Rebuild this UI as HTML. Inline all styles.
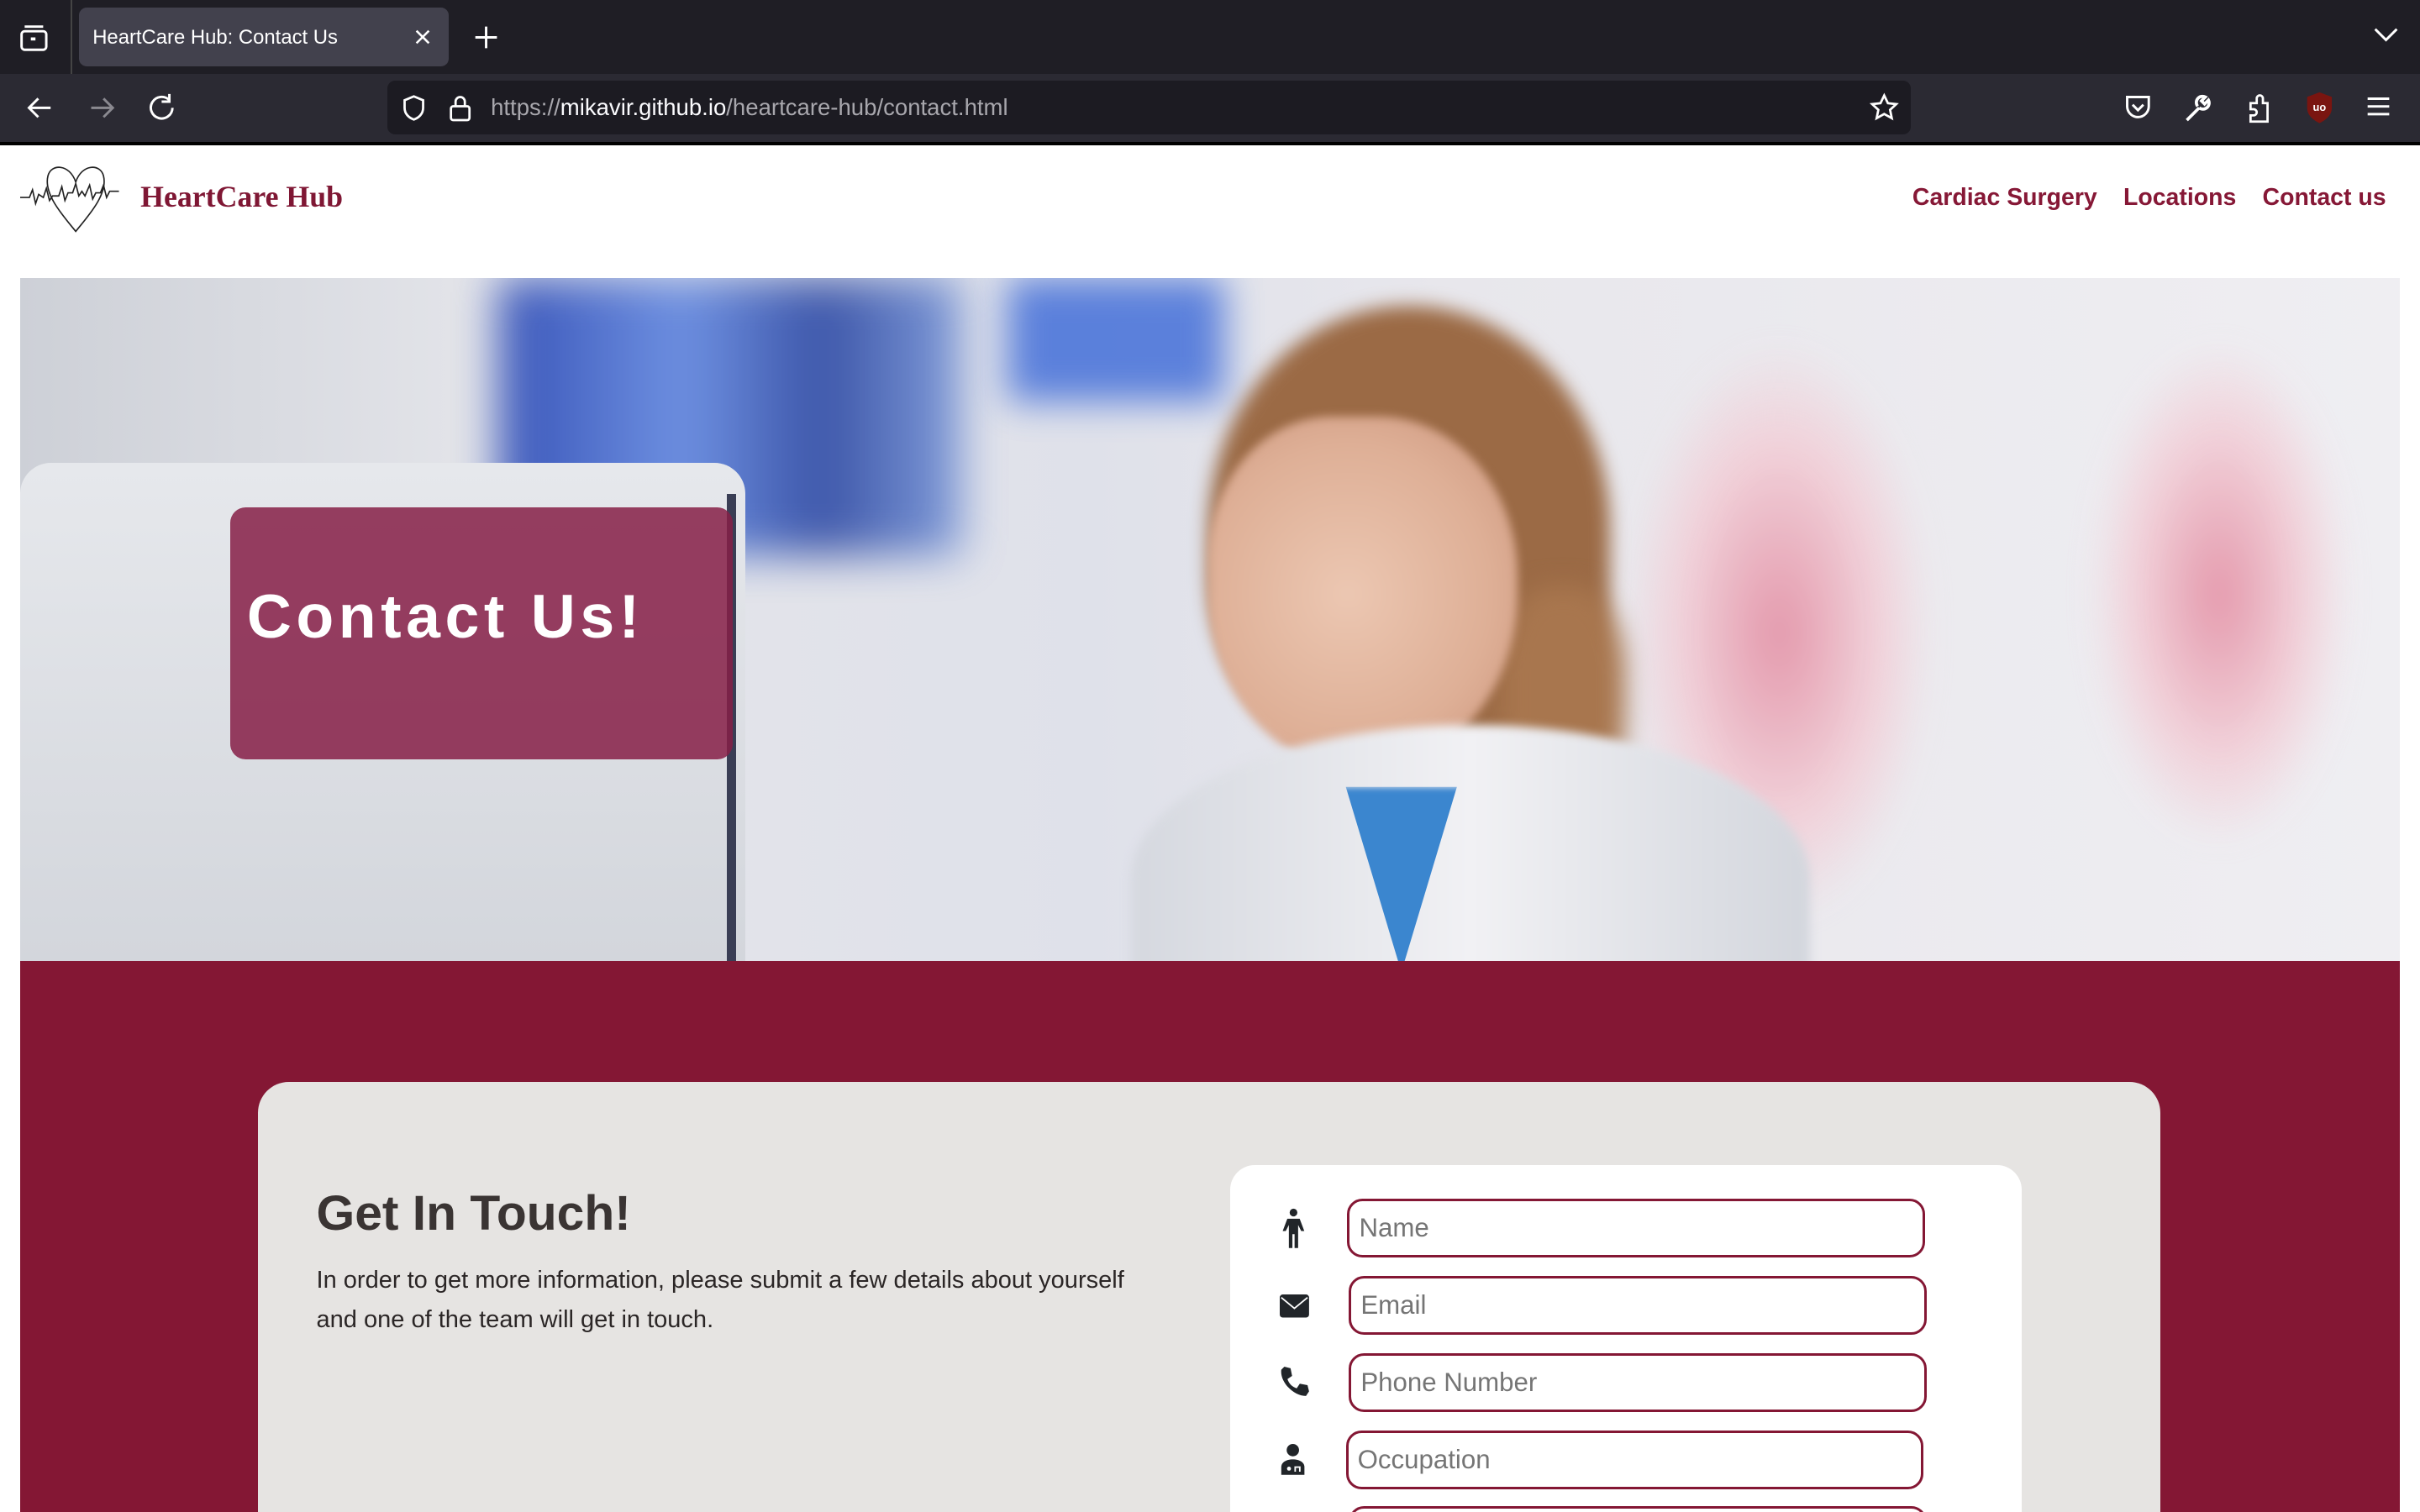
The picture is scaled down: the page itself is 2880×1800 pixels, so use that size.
<!DOCTYPE html>
<html><head><meta charset="utf-8"><style>
html,body{margin:0;padding:0;overflow:hidden}
body{width:1568px;height:980px;zoom:1.83673;position:relative;background:#fff;font-family:"Liberation Sans",sans-serif}
.abs{position:absolute}
svg{position:absolute}
</style></head><body>
<!-- tab bar -->
<div class="abs" style="left:0;top:0;width:1568px;height:48px;background:#1f1e25"></div>
<div class="abs" style="left:46px;top:0;width:1px;height:48px;background:#444"></div>
<svg style="left:12px;top:15px" width="20" height="20" viewBox="0 0 20 20" fill="none" stroke="#fff" stroke-width="1.6"><rect x="2" y="5" width="16" height="12" rx="2"/><path d="M4 2h12"/><rect x="8" y="9" width="3" height="2" fill="#fff" stroke="none"/></svg>
<div class="abs" style="left:51px;top:5px;width:240px;height:38px;background:#42414d;border-radius:5px"></div>
<div class="abs" style="left:60px;top:17px;color:#fff;font-size:13px">HeartCare Hub: Contact Us</div>
<svg style="left:268px;top:18px" width="12" height="12" viewBox="0 0 12 12" stroke="#fff" stroke-width="1.4"><path d="M2 2l8 8M10 2l-8 8"/></svg>
<svg style="left:306px;top:15px" width="18" height="18" viewBox="0 0 18 18" stroke="#fff" stroke-width="1.6"><path d="M9 2v14M2 9h14"/></svg>
<svg style="left:1537px;top:17px" width="18" height="12" viewBox="0 0 18 12" fill="none" stroke="#fff" stroke-width="1.6"><path d="M2 2l7 7 7-7"/></svg>
<!-- toolbar -->
<div class="abs" style="left:0;top:48px;width:1568px;height:44px;background:#2b2a33"></div>
<div class="abs" style="left:0;top:92px;width:1568px;height:2px;background:#000"></div>
<svg style="left:16px;top:60px" width="20" height="20" viewBox="0 0 20 20" fill="none" stroke="#fff" stroke-width="1.6"><path d="M17 10H3M9 4l-6 6 6 6"/></svg>
<svg style="left:56px;top:60px" width="20" height="20" viewBox="0 0 20 20" fill="none" stroke="#8a8990" stroke-width="1.6"><path d="M3 10h14M11 4l6 6-6 6"/></svg>
<svg style="left:95px;top:60px" width="20" height="20" viewBox="0 0 20 20" fill="none" stroke="#fff" stroke-width="1.6"><path d="M15 5A7 7 0 1 0 17 10"/><path d="M15 1v5h-5"/></svg>
<div class="abs" style="left:251px;top:52px;width:987px;height:35px;background:#1c1b22;border-radius:5px"></div>
<svg style="left:259px;top:61px" width="18" height="18" viewBox="0 0 18 18" fill="none" stroke="#fff" stroke-width="1.5"><path d="M9 1.5l6 2.5v5c0 4-3 6.5-6 7.5-3-1-6-3.5-6-7.5V4z"/></svg>
<svg style="left:290px;top:60px" width="16" height="20" viewBox="0 0 16 20" fill="none" stroke="#fff" stroke-width="1.5"><rect x="2" y="9" width="12" height="9" rx="1.5"/><path d="M5 9V6a3 3 0 0 1 6 0v3"/></svg>
<div class="abs" style="left:318px;top:61px;font-size:15px;color:#a8a7ad">https://<span style="color:#fbfbfe">mikavir.github.io</span>/heartcare-hub/contact.html</div>
<svg style="left:1211px;top:60px" width="20" height="20" viewBox="0 0 20 20" fill="none" stroke="#fff" stroke-width="1.5"><path d="M10 2l2.4 5 5.4.6-4 3.7 1.1 5.4L10 14l-4.9 2.7 1.1-5.4-4-3.7 5.4-.6z"/></svg>
<svg style="left:1375px;top:60px" width="20" height="20" viewBox="0 0 20 20" fill="none" stroke="#fff" stroke-width="1.6"><path d="M3 3h14v6a7 7 0 0 1-14 0z"/><path d="M6.5 8l3.5 3.5L13.5 8"/></svg>
<svg style="left:1414px;top:60px" width="20" height="20" viewBox="0 0 20 20" fill="none" stroke="#fff" stroke-width="2"><path d="M3 18l8-8"/><path d="M11 10a4 4 0 0 0 6-5l-2.5 2.5-2-2L15 3a4 4 0 0 0-5 6"/></svg>
<svg style="left:1454px;top:59px" width="20" height="22" viewBox="0 0 20 22" fill="none" stroke="#fff" stroke-width="1.5"><path d="M4 8h4V5a2 2 0 0 1 4 0v3h3v12H4v-4h2a2 2 0 0 0 0-4H4z"/></svg>
<svg style="left:1493px;top:59px" width="20" height="22" viewBox="0 0 20 22"><path d="M10 1l8 3v7c0 5-4 8-8 10-4-2-8-5-8-10V4z" fill="#7a1510"/><text x="10" y="13" font-size="7" fill="#fff" text-anchor="middle" font-family="Liberation Sans" font-weight="bold">uo</text></svg>
<svg style="left:1532px;top:61px" width="18" height="16" viewBox="0 0 18 16" stroke="#fff" stroke-width="1.6"><path d="M2 3h14M2 8h14M2 13h14"/></svg>
<!-- header -->
<svg style="left:13px;top:104px" width="74" height="48" viewBox="0 0 74 48" fill="none" stroke="#222" stroke-width="0.9"><path d="M36 14C32 2 20 2 18 10c-3 12 10 26 18 36 8-10 21-24 18-36-2-8-14-8-18 4z"/><path d="M0 24h6l2-5 2 9 2-6 3 2 2-6 2 8 2-3h4l2-6 2 9 2-5h3l2-6 2 8 2-3 2 3 3-7 2 9 2-4h3l2-5 2 8 2-4h6"/></svg>
<div class="abs" style="left:91px;top:116px;font-family:'Liberation Serif',serif;font-weight:bold;font-size:19.5px;color:#7f1734">HeartCare Hub</div>
<div class="abs" style="right:22px;top:119px;font-weight:bold;font-size:15.5px;color:#861836">
<span>Cardiac Surgery</span><span style="margin-left:17px">Locations</span><span style="margin-left:17px">Contact us</span></div>
<!-- hero -->
<div class="abs" style="left:13px;top:180px;width:1542px;height:443px;overflow:hidden;background:linear-gradient(90deg,#cdd0d7 0%,#e4e5ea 20%,#dfe1ea 45%,#e8e7ec 60%,#efeef2 100%)">
 <div class="abs" style="left:310px;top:0;width:300px;height:180px;background:linear-gradient(90deg,#1c3cb0,#5a82e0 40%,#213e9e 70%,#6f8fd6);filter:blur(14px);opacity:.85"></div>
 <div class="abs" style="left:640px;top:0;width:140px;height:80px;background:#3a68d8;filter:blur(12px);opacity:.8"></div>
 <div class="abs" style="left:0;top:120px;width:470px;height:323px;background:linear-gradient(180deg,#e6e8ec,#d3d6dc);border-radius:20px 20px 0 0"></div>
 <div class="abs" style="left:458px;top:140px;width:6px;height:303px;background:#3a3e55"></div>
 <div class="abs" style="left:1040px;top:40px;width:200px;height:380px;background:radial-gradient(ellipse,#e38aa0 0%,#f2cdd6 45%,transparent 70%);filter:blur(10px);opacity:.85"></div>
 <div class="abs" style="left:1340px;top:40px;width:170px;height:330px;background:radial-gradient(ellipse,#e38aa0 0%,#f2cdd6 45%,transparent 70%);filter:blur(10px);opacity:.85"></div>
 <div class="abs" style="left:770px;top:18px;width:260px;height:290px;border-radius:50% 50% 40% 40%;background:#9b6a45;filter:blur(6px)"></div>
 <div class="abs" style="left:960px;top:200px;width:80px;height:140px;border-radius:40%;background:#a8764e;filter:blur(8px)"></div>
 <div class="abs" style="left:770px;top:90px;width:200px;height:230px;border-radius:40% 45% 50% 50%;background:radial-gradient(ellipse at 45% 50%,#ecc7b2 0%,#deaf96 60%,#c99279 100%);filter:blur(3px)"></div>
 <div class="abs" style="left:720px;top:290px;width:440px;height:200px;border-radius:50% 50% 0 0;background:linear-gradient(90deg,#d5d8df,#f1f1f4 50%,#d3d6dd);filter:blur(3px)"></div>
 <div class="abs" style="left:850px;top:330px;width:90px;height:120px;background:#3b86cf;clip-path:polygon(10% 0,90% 0,50% 100%);filter:blur(2px)"></div>
</div>
<div class="abs" style="left:149px;top:329px;width:326px;height:163px;background:rgba(134,30,70,.85);border-radius:10px"></div>
<div class="abs" style="left:160px;top:376px;color:#fff;font-size:40px;letter-spacing:3px;font-weight:bold">Contact Us!</div>
<!-- maroon section -->
<div class="abs" style="left:13px;top:623px;width:1542px;height:357px;background:#841734"></div>
<div class="abs" style="left:167px;top:701px;width:1233px;height:300px;background:#e6e4e2;border-radius:20px"></div>
<div class="abs" style="left:205px;top:768px;font-size:32px;font-weight:bold;color:#3a3433">Get In Touch!</div>
<div class="abs" style="left:205px;top:817px;width:548px;font-size:15.8px;line-height:26px;color:#2b2626">In order to get more information, please submit a few details about yourself and one of the team will get in touch.</div>
<div class="abs" style="left:797px;top:755px;width:513px;height:260px;background:#fff;border-radius:16px"></div>
<div class="abs" style="left:873px;top:777px;width:371px;height:35px;border:2px solid #841734;border-radius:10px;font-size:17px;color:#757575;line-height:35px;text-indent:6px">Name</div>
<div class="abs" style="left:874px;top:827px;width:371px;height:35px;border:2px solid #841734;border-radius:10px;font-size:17px;color:#757575;line-height:35px;text-indent:6px">Email</div>
<div class="abs" style="left:874px;top:877px;width:371px;height:35px;border:2px solid #841734;border-radius:10px;font-size:17px;color:#757575;line-height:35px;text-indent:6px">Phone Number</div>
<div class="abs" style="left:872px;top:927px;width:371px;height:35px;border:2px solid #841734;border-radius:10px;font-size:17px;color:#757575;line-height:35px;text-indent:6px">Occupation</div>
<div class="abs" style="left:874px;top:976px;width:371px;height:35px;border:2px solid #841734;border-radius:10px"></div>
<svg style="left:828px;top:783px" width="20" height="28" viewBox="0 0 20 28" fill="#212529"><circle cx="10" cy="3" r="2.5"/><path d="M6 7h8l3 8h-2l-2-4v15h-2.3v-9h-1.4v9H7V11l-2 4H3z"/></svg>
<svg style="left:829px;top:839px" width="19" height="15" viewBox="0 0 19 15"><rect x="0" y="0" width="19" height="15" rx="2" fill="#212529"/><path d="M1 2l8.5 7L18 2" fill="none" stroke="#fff" stroke-width="1"/></svg>
<svg style="left:829px;top:886px" width="19" height="20" viewBox="0 0 19 20" fill="#212529"><path d="M3 0l4 1 1 5-3 2c1 3 3 5 6 6l2-3 5 1 1 4-2 3C9 19 0 10 1 2z"/></svg>
<svg style="left:829px;top:936px" width="17" height="21" viewBox="0 0 17 21" fill="#212529"><circle cx="8.5" cy="4" r="4"/><path d="M1 20v-5c0-3 3-5 7.5-5s7.5 2 7.5 5v5z"/><circle cx="6" cy="16" r="1.3" fill="#fff"/><path d="M10 18v-3h3v3" fill="none" stroke="#fff" stroke-width="1"/></svg>
</body></html>
